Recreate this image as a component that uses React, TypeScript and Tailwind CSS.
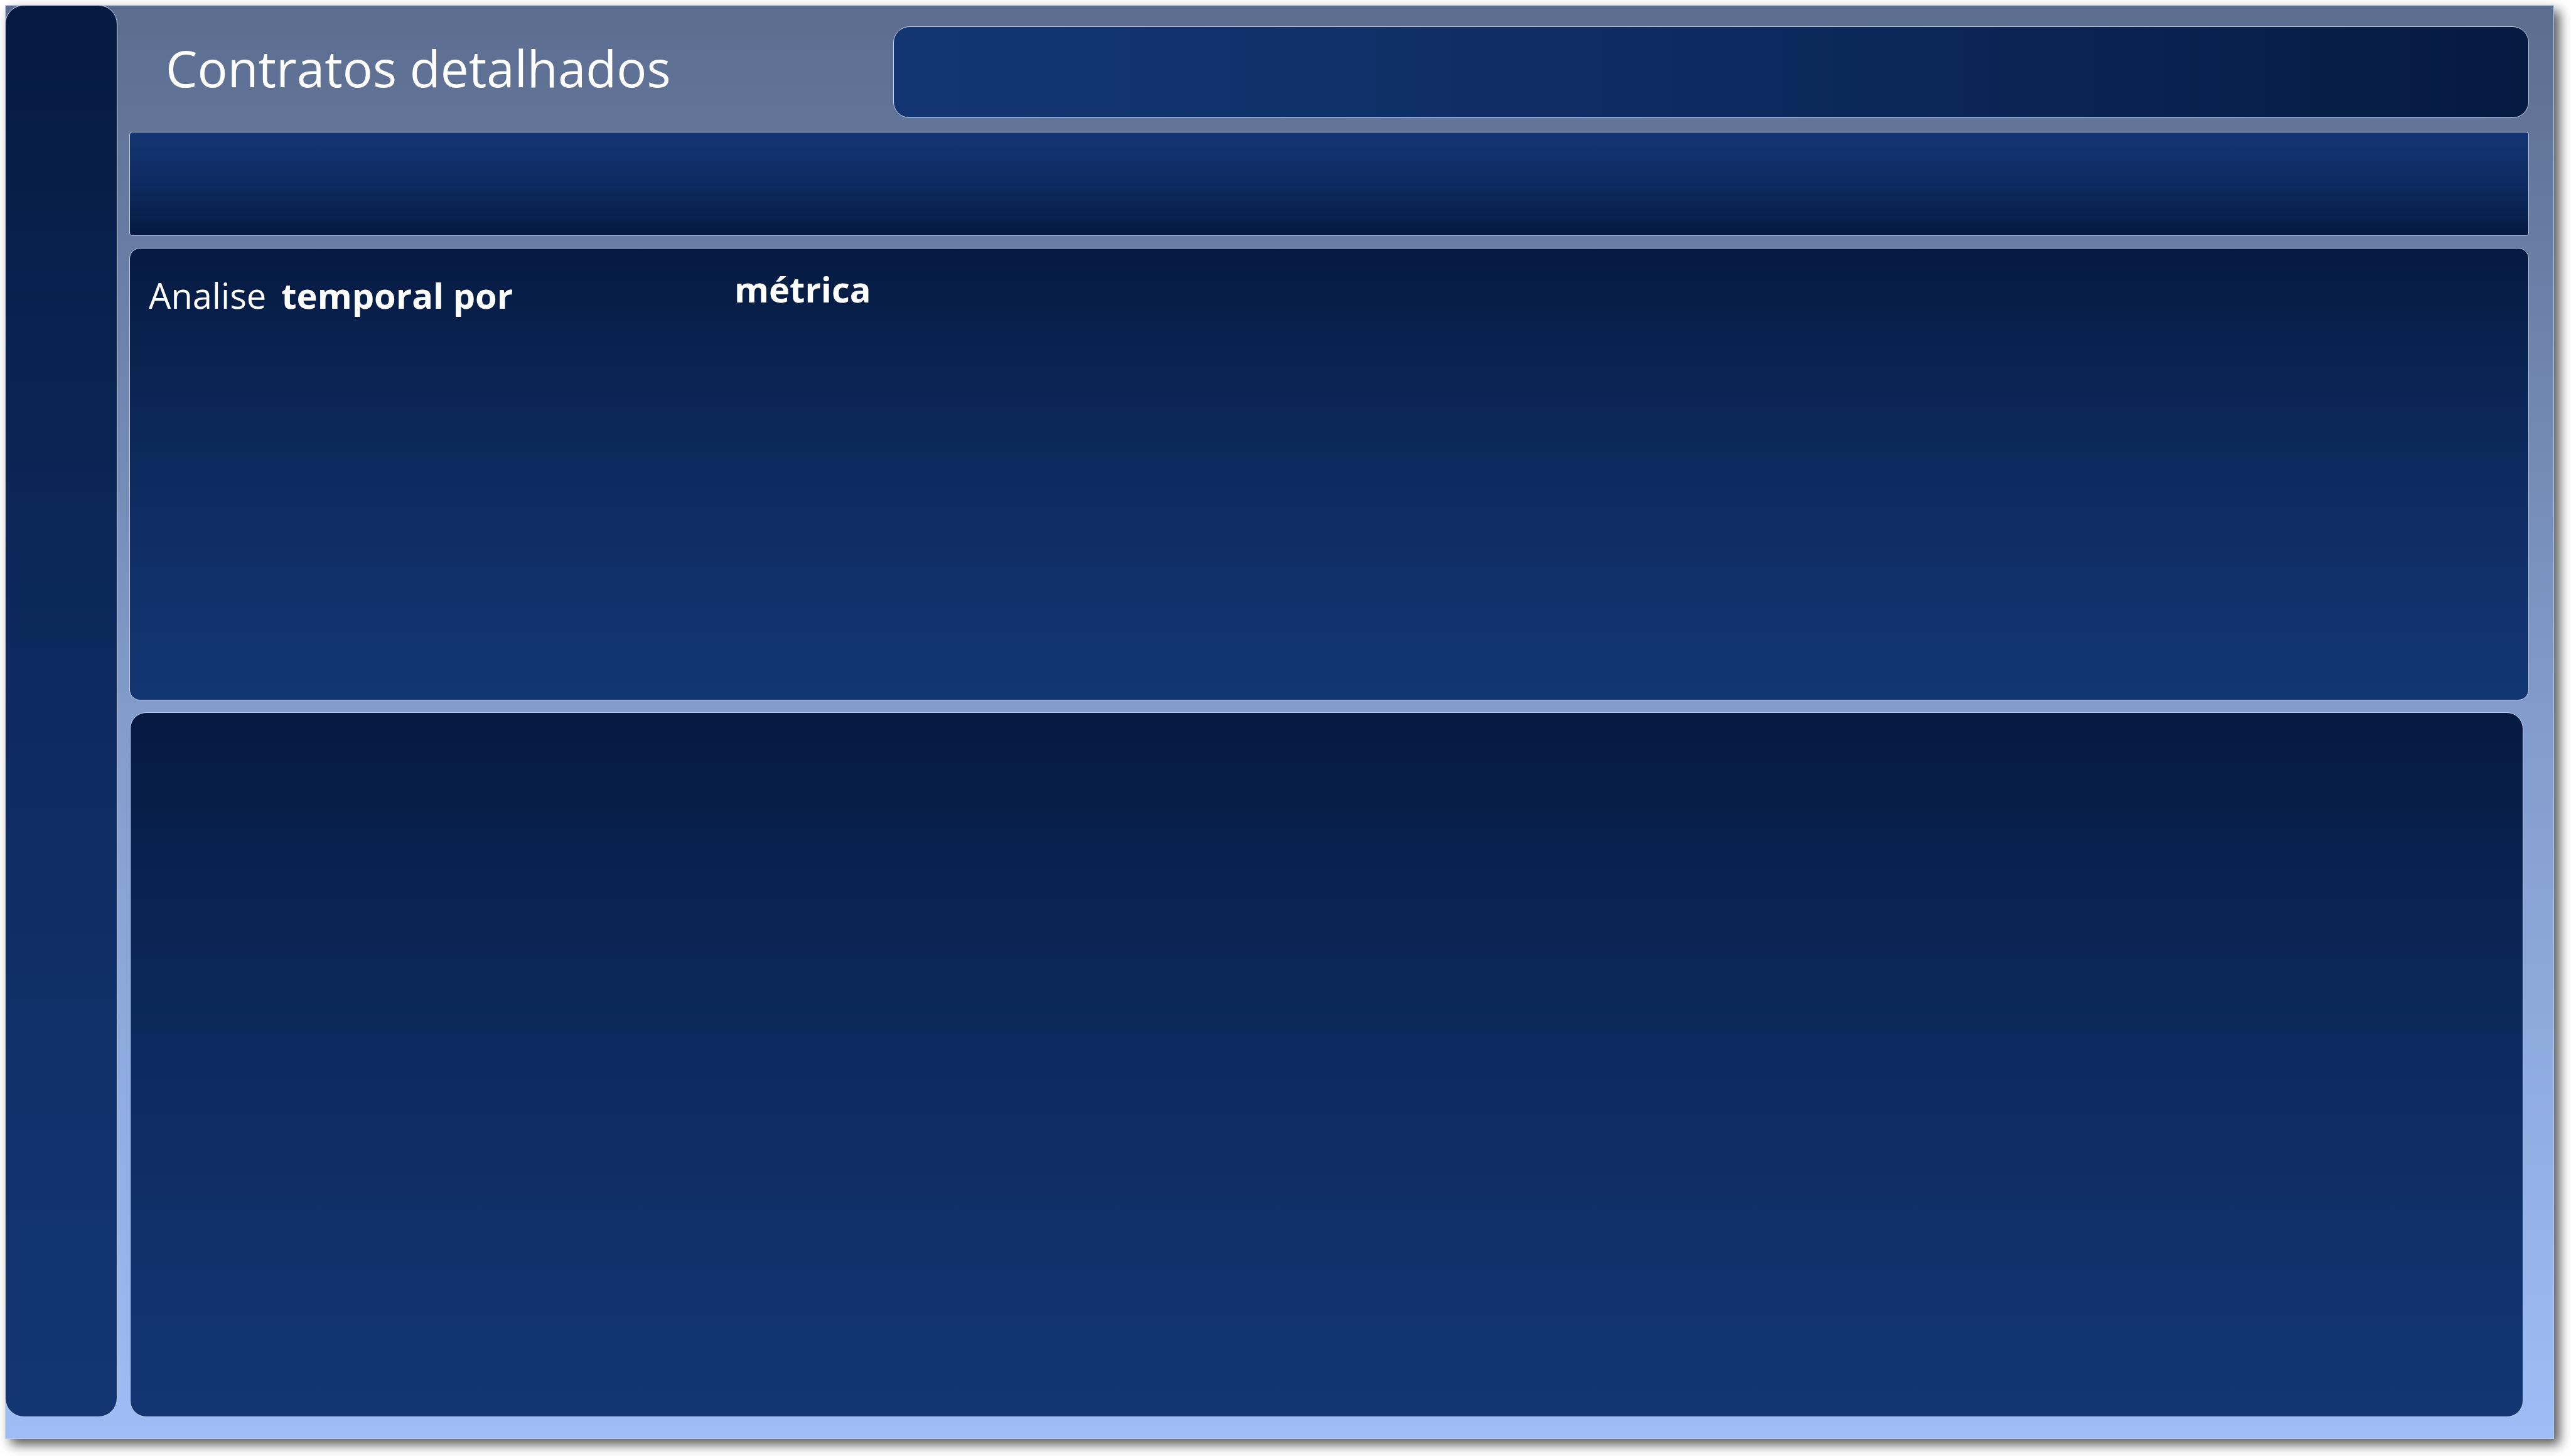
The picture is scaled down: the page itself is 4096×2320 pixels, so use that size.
export default function App() {
  return (
    <div className="flex min-h-screen bg-white pt-2 pr-[27px] pb-[27px] pl-2 font-['Open_Sans','Noto_Sans',sans-serif] text-white">
      <div className="flex grow gap-[19px] bg-linear-to-b/srgb from-[#5b6d8f] via-[#829ccb] to-[#9ebdf6] pr-10 pb-[35px] shadow-[9px_9px_17px_rgba(0,0,0,0.65)] outline-1 -outline-offset-1 outline-[#c3d0ea]">
        <nav
          aria-label="Menu"
          className="w-[179px] shrink-0 rounded-[30px] border border-[#c3d0ea] bg-linear-to-b/srgb from-[#051a41] via-[#0d2b60] to-[#133673]"
        />

        <main className="flex min-w-0 grow flex-col gap-[19px] pt-[34px]">
          <header className="mb-[3px] grid h-[146px] grid-cols-[1217fr_2606fr]">
            <h1 className="pt-[10px] pl-[58px] text-[80px] leading-[112px] whitespace-nowrap">
              Contratos detalhados
            </h1>
            <div className="rounded-[26px] border border-[#c3d0ea] bg-linear-to-r/srgb from-[#133673] via-[#0d2b60] to-[#051a41]" />
          </header>

          <div className="h-[166px] rounded-[5px] border border-[#c3d0ea] bg-linear-to-b/srgb from-[#133673] via-[#0d2b60] to-[#051a41]" />

          <section
            aria-labelledby="analise"
            className="grow-[721] basis-0 rounded-[17px] border border-[#c3d0ea] bg-linear-to-b/srgb from-[#051a41] via-[#0d2b60] to-[#133673]"
          >
            <div className="flex items-start pt-6 pl-[30px] text-[56px] leading-[80px]">
              <h2 id="analise" className="flex w-[933px] gap-6 pt-[10px] whitespace-nowrap">
                <span>Analise</span>
                <span className="font-bold">temporal por</span>
              </h2>
              <strong className="font-bold">métrica</strong>
            </div>
          </section>

          <section
            aria-label="Contratos"
            className="mr-[9px] ml-px grow-[1123] basis-0 rounded-[26px] border border-[#c3d0ea] bg-linear-to-b/srgb from-[#051a41] via-[#0d2b60] to-[#133673]"
          />
        </main>
      </div>
    </div>
  );
}
